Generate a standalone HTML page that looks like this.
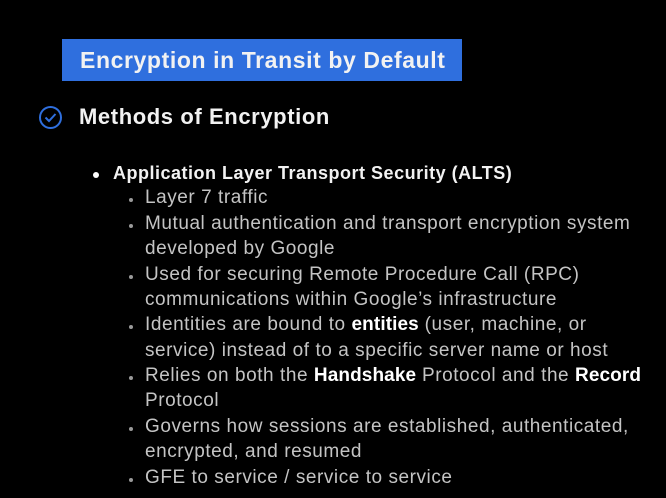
<!DOCTYPE html>
<html><head><style>
body{margin:0;width:666px;height:498px;background:#000;overflow:hidden;font-family:"Liberation Sans",sans-serif;position:relative}
.t{position:absolute;white-space:nowrap}
.box{position:absolute;left:62px;top:39px;width:400px;height:42px;background:#2f6fde}
.h{color:#f2f2f2;font-weight:bold;letter-spacing:0.6px}
.s{color:#c4c4c4;font-size:19px;left:145px;letter-spacing:0.55px}
.d{position:absolute;left:129px;width:4px;height:4px;border-radius:50%;background:#9a9a9a}
b{color:#fff;letter-spacing:0.1px}
</style></head><body>
<div class="box"></div>
<div class="t h" style="left:80px;top:47px;font-size:23px">Encryption in Transit by Default</div>
<svg style="position:absolute;left:38px;top:105px" width="25" height="25"><circle cx="12.5" cy="12.5" r="10.5" fill="none" stroke="#2f6fde" stroke-width="2"/><path d="M7.5 12.5l3.5 3.5 6.5-7" fill="none" stroke="#2f6fde" stroke-width="2"/></svg>
<div class="t h" style="left:79px;top:104px;font-size:22px">Methods of Encryption</div>
<div style="position:absolute;left:93px;top:172px;width:6px;height:6px;border-radius:50%;background:#fff"></div>
<div class="t h" style="left:113px;top:163px;font-size:18px;letter-spacing:0.5px">Application Layer Transport Security (ALTS)</div>
<div class="d" style="top:198px"></div><div class="t s" style="top:187px">Layer 7 traffic</div>
<div class="d" style="top:224px"></div><div class="t s" style="top:213px">Mutual authentication and transport encryption system</div>
<div class="t s" style="top:238px">developed by Google</div>
<div class="d" style="top:275px"></div><div class="t s" style="top:264px">Used for securing Remote Procedure Call (RPC)</div>
<div class="t s" style="top:289px">communications within Google’s infrastructure</div>
<div class="d" style="top:325px"></div><div class="t s" style="top:314px">Identities are bound to <b>entities</b> (user, machine, or</div>
<div class="t s" style="top:340px">service) instead of to a specific server name or host</div>
<div class="d" style="top:376px"></div><div class="t s" style="top:365px">Relies on both the <b>Handshake</b> Protocol and the <b>Record</b></div>
<div class="t s" style="top:390px">Protocol</div>
<div class="d" style="top:427px"></div><div class="t s" style="top:416px">Governs how sessions are established, authenticated,</div>
<div class="t s" style="top:441px">encrypted, and resumed</div>
<div class="d" style="top:478px"></div><div class="t s" style="top:467px">GFE to service / service to service</div>
</body></html>
